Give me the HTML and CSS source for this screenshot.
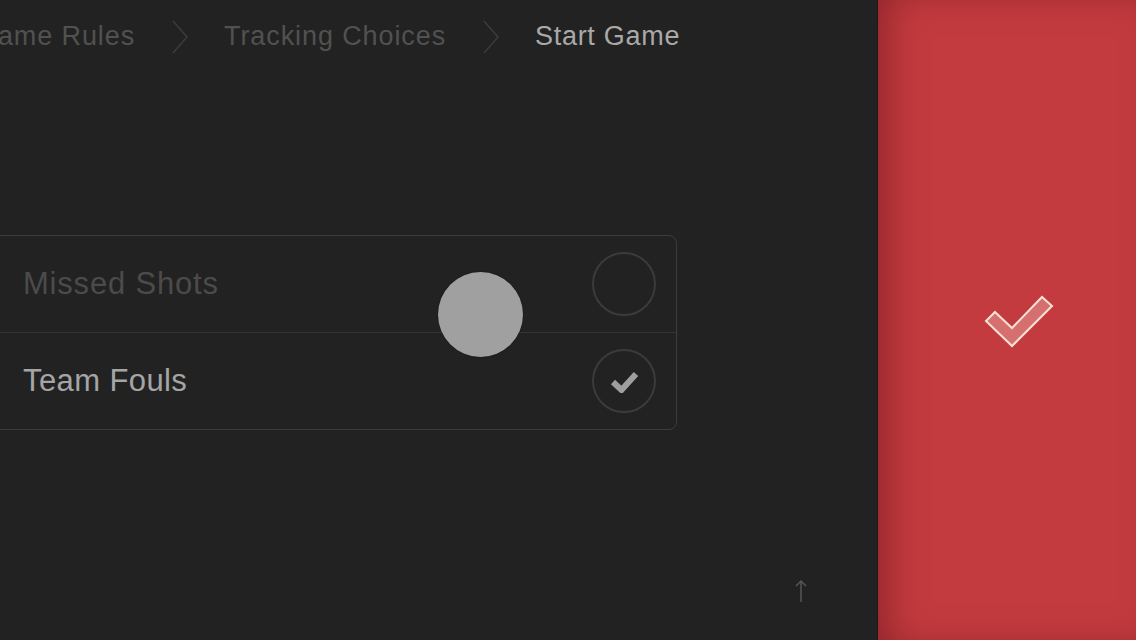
FILE: index.html
```html
<!DOCTYPE html>
<html>
    <head>
        <meta charset="utf-8">
        <title>Start Game</title>
        <link rel="stylesheet" href="styles.css">
    </head>
    <body>
        <div id="container">
            <div id="main">
                <div class="crumbs">
                    <span class="crumb">Game Rules</span>
                    <svg class="chevron" width="16" height="34" viewBox="0 0 16 34"><polyline points="1,1 15,17 1,33" fill="none" stroke="#3c3c3c" stroke-width="1.5"/></svg>
                    <span class="crumb">Tracking Choices</span>
                    <svg class="chevron" width="16" height="34" viewBox="0 0 16 34"><polyline points="1,1 15,17 1,33" fill="none" stroke="#3c3c3c" stroke-width="1.5"/></svg>
                    <span class="crumb current">Start Game</span>
                </div>

                <div class="choices">
                    <div class="choice">
                        <span class="label off">Missed Shots</span>
                        <span class="tick"></span>
                    </div>
                    <div class="choice">
                        <span class="label">Team Fouls</span>
                        <span class="tick">
                            <svg width="32" height="24" viewBox="0 0 32 24"><polyline points="5,13 13.5,21 28,5" fill="none" stroke="#9e9e9e" stroke-width="6" stroke-linejoin="miter"/></svg>
                        </span>
                    </div>
                </div>

                <div id="touch"></div>

                <svg id="toTop" width="12" height="24" viewBox="0 0 12 24"><path d="M6 23 V2 M1 7 L6 2 L11 7" fill="none" stroke="#555" stroke-width="1.5"/></svg>
            </div>

            <div id="confirm">
                <svg width="70" height="54" viewBox="0 0 70 54"><polygon points="11,17 28,33 58,2 68,11 28,51 2,26" fill="rgba(255,235,225,0.3)" stroke="#f6e3d3" stroke-width="2"/></svg>
            </div>
        </div>
    </body>
</html>
```

FILE: styles.css
```css
body {
    margin: 0;
    background-color: #222222;
    font-family: "Liberation Sans", Arial, Helvetica, sans-serif;
    overflow: hidden;
}

#container {
    display: flex;
    height: 640px;
}

#main {
    flex: 0 0 877px;
    position: relative;
    overflow: hidden;
    background-color: #222222;
}

/* breadcrumb */
.crumbs {
    display: flex;
    align-items: center;
    height: 73px;
    margin-left: -24px;
    white-space: nowrap;
}
.crumb {
    font-size: 27px;
    line-height: 1;
    color: #515151;
    letter-spacing: 0.9px;
}
.crumb.current {
    color: #a9a9a9;
    letter-spacing: 0.7px;
}
.chevron {
    margin: 0 36px 0 37px;
    flex: none;
}

/* tracking list */
.choices {
    margin-top: 162px;
    margin-left: -40px;
    width: 715px;
    border: 1px solid #3c3c3c;
    border-radius: 8px;
}
.choice {
    display: flex;
    align-items: center;
    justify-content: space-between;
    height: 96px;
    padding-left: 62px;
    padding-right: 20px;
}
.choice + .choice {
    border-top: 1px solid #343434;
}
.label {
    font-size: 31px;
    letter-spacing: 0.4px;
    color: #a5a5a5;
}
.label.off {
    color: #4b4b4b;
    letter-spacing: 0.8px;
}
.tick {
    width: 60px;
    height: 60px;
    border: 2px solid #3b3b3b;
    border-radius: 50%;
    display: flex;
    align-items: center;
    justify-content: center;
}

/* finger marker */
#touch {
    position: absolute;
    left: 438px;
    top: 272px;
    width: 85px;
    height: 85px;
    border-radius: 50%;
    background-color: #a0a0a0;
    box-shadow: 0 0 2px rgba(0,0,0,0.4);
}

#toTop {
    position: absolute;
    left: 795px;
    top: 579px;
}

/* red panel */
#confirm {
    flex: 1;
    background-color: #c43b3f;
    border-left: 1px solid #1a1a1a;
    box-shadow: inset 18px 0 40px -12px rgba(90, 15, 20, 0.55);
    display: flex;
    align-items: center;
    justify-content: center;
    padding-top: 3px;
    padding-left: 24px;
}
```
